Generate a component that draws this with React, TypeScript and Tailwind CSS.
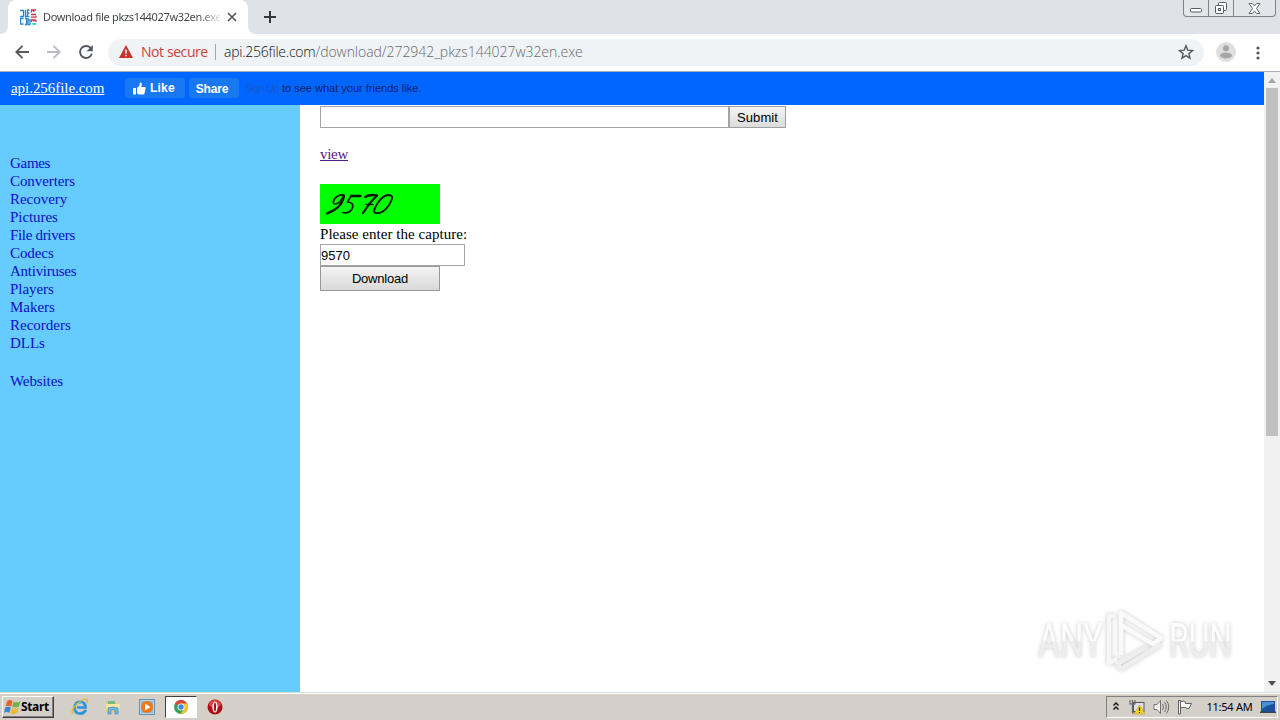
import React from "react";

const categories = [
  { name: "Games", tracking: "tracking-[-0.3px]" },
  { name: "Converters", tracking: "tracking-[-0.08px]" },
  { name: "Recovery", tracking: "tracking-[-0.02px]" },
  { name: "Pictures", tracking: "tracking-[-0.06px]" },
  { name: "File drivers", tracking: "tracking-[-0.32px]" },
  { name: "Codecs", tracking: "tracking-[-0.08px]" },
  { name: "Antiviruses", tracking: "tracking-[-0.26px]" },
  { name: "Players", tracking: "tracking-[-0.06px]" },
  { name: "Makers", tracking: "tracking-[-0.02px]" },
  { name: "Recorders", tracking: "tracking-[0px]" },
  { name: "DLLs", tracking: "tracking-[-0.02px]" },
];

function SiteIcon() {
  return (
    <svg width="17" height="17" viewBox="0 0 17 17" fill="none" className="shrink-0">
      <path d="M0 1.500H3.500V7.500H0M5.500 1V7.500H7M9.500 1H7.500V7.500H9.500M7.500 4H9.500M3.500 9.500H.5V15H3.500M5 9.500H6.500V15.500H5M8 9V15.500H10V11H8" stroke="#2b85cf" strokeWidth="1.300" />
      <path d="M11.500 .5V3.500M11 1H16M13.700 1V3M11 5.500H16M11 8.200H16V6.800M11.500 10.500V13M11 11H16M13.700 11V12.500M16 11V13" stroke="#d62f4d" strokeWidth="1.300" />
      <path d="M11.500 14H16V16H13Z" fill="#3be0ad" />
    </svg>
  );
}

function TabStrip() {
  return (
    <div className="flex h-[34px] items-start bg-[#dee1e6]">
      <div className="h-[34px] w-[8px] bg-white"><div className="h-[34px] w-[8px] rounded-br-[8px] bg-[#dee1e6]" /></div>
      <div className="flex h-[34px] w-[240px] items-center rounded-t-[8px] bg-white pl-[12px]">
        <SiteIcon />
        <div className="ml-[6px] w-[177px] whitespace-nowrap bg-gradient-to-r from-[#3c4043] from-88% to-[#3c404322] bg-clip-text font-['Noto_Sans',sans-serif] text-[11px] leading-[16px] tracking-[-0.34px] text-transparent">Download file pkzs144027w32en.exe</div>
        <svg width="10" height="10" viewBox="0 0 10 10" className="ml-[7px]"><path d="M1 1L9 9M9 1L1 9" stroke="#55595e" strokeWidth="1.700" /></svg>
      </div>
      <div className="h-[34px] w-[8px] bg-white"><div className="h-[34px] w-[8px] rounded-bl-[8px] bg-[#dee1e6]" /></div>
      <svg width="12" height="12" viewBox="0 0 12 12" className="ml-[8px] mt-[11px]"><path d="M6 0V12M0 6H12" stroke="#33373b" strokeWidth="2" /></svg>
      <div className="ml-auto mr-[4px] flex h-[17px] w-[93px] overflow-hidden rounded-b-[4px] border border-t-0 border-[#7e848b] bg-[#e3e5e9]">
        <div className="flex w-[25px] items-center justify-center border-r border-[#7e848b]"><svg width="14" height="16" viewBox="0 0 14 16"><rect x="1.500" y="8.500" width="11" height="3.500" rx="1" fill="#fff" stroke="#555b63" /></svg></div>
        <div className="flex w-[25px] items-center justify-center border-r border-[#7e848b]">
          <svg width="14" height="14" viewBox="0 0 14 14" fill="#fff" stroke="#555b63"><rect x="4.500" y="1.500" width="8" height="8" rx="1" /><rect x="1.500" y="4.500" width="8" height="8" rx="1" /><rect x="4.500" y="7.500" width="2" height="2" /></svg>
        </div>
        <div className="flex flex-1 items-center justify-center"><svg width="13" height="11" viewBox="0 0 13 11"><path d="M1 .5H4.500L6.500 3L8.500 .5H12L8.500 5.500L12 10.500H8.500L6.500 8L4.500 10.500H1L4.500 5.500Z" fill="#fff" stroke="#60666e" /></svg></div>
      </div>
    </div>
  );
}

function Toolbar() {
  return (
    <div className="flex h-[38px] items-center border-b border-[#a9afb8] bg-white font-['Open_Sans','Noto_Sans',sans-serif] text-[14px] leading-[20px]">
      <svg width="14" height="14" viewBox="0 0 14 14" fill="none" stroke="#55595e" strokeWidth="1.900" className="mb-[2px] ml-[15px]"><path d="M14 7H1.500M7.500 .8L1.300 7L7.500 13.200" /></svg>
      <svg width="14" height="14" viewBox="0 0 14 14" fill="none" stroke="#b9bbbe" strokeWidth="1.900" className="mb-[2px] ml-[18px]"><path d="M0 7H12.500M6.500 .8L12.700 7L6.500 13.200" /></svg>
      <svg width="14" height="14" viewBox="0 0 14 14" fill="none" stroke="#55595e" strokeWidth="1.900" className="mb-[2px] ml-[18px]"><path d="M12 3.500A6 6 0 1 0 12.800 8.800" /><path d="M13.800 0V6.200H7.600Z" fill="#55595e" stroke="none" /></svg>
      <div className="mb-px ml-[15px] flex h-[27px] w-[1096px] items-center rounded-full bg-[#f0f3f5] pb-px pl-[11px]">
        <svg width="14" height="13" viewBox="0 0 14 13"><path d="M7 0L14 13H0Z" fill="#cc302b" /><path d="M7 4.500V8.500M7 9.700V11.200" stroke="#fff" strokeWidth="1.500" /></svg>
        <div className="ml-[8px] w-[68px] whitespace-nowrap tracking-[-0.42px] text-[#c9413c]">Not secure</div>
        <div className="ml-[6px] h-[16px] w-px bg-[#a3a7ac]" />
        <div className="ml-[8px] whitespace-nowrap font-light text-[#66696d]"><span className="tracking-[-0.24px] text-[#111214]">api.256file.com</span><span className="tracking-[-0.05px]">/download/272942_pkzs144027w32en.exe</span></div>
        <svg width="16" height="16" viewBox="0 0 16 16" className="ml-auto mr-[10px]"><path d="M8 1.700L9.800 6.100L14.500 6.500L10.900 9.600L12 14.200L8 11.700L4 14.200L5.100 9.600L1.500 6.500L6.200 6.100Z" fill="none" stroke="#55595e" strokeWidth="1.400" /></svg>
      </div>
      <svg width="20" height="20" viewBox="0 0 20 20" className="mb-[2px] ml-[12px]"><circle cx="10" cy="10" r="10" fill="#dedfe1" /><circle cx="10" cy="6.200" r="3" fill="#a6a6a7" /><ellipse cx="10" cy="13.500" rx="6" ry="3" fill="#a6a6a7" /></svg>
      <svg width="4" height="14" viewBox="0 0 4 14" className="ml-[20px]" fill="#55595e"><circle cx="2" cy="2" r="1.600" /><circle cx="2" cy="7" r="1.600" /><circle cx="2" cy="12" r="1.600" /></svg>
    </div>
  );
}

function SiteHeader() {
  return (
    <header className="flex h-[33px] items-center bg-[#0066ff] pb-px pl-[11px] font-['Liberation_Sans',sans-serif]">
      <a className="w-[93px] whitespace-nowrap font-['Liberation_Serif',serif] text-[15px] leading-[18px] tracking-[-0.05px] text-white underline">api.256file.com</a>
      <button className="ml-[21px] flex h-[20px] w-[60px] items-center rounded-[3px] bg-[#1778f2] pl-[8px] text-[12px] font-bold leading-[16px] text-white">
        <svg width="13" height="13" viewBox="0 0 13 13" fill="#fff"><path d="M0 6H3V12.500H0ZM4 6L6.500 3.500L6.800 .5Q9 .2 8.800 2.500L8.300 5H12Q13 5.200 12.700 6.300L11.500 11.500Q11.200 12.500 10 12.500H6L4 11.500Z" /></svg>
        <span className="ml-[4px] tracking-[0.2px]">Like</span>
      </button>
      <button className="ml-[4px] flex h-[20px] w-[50px] items-center justify-center rounded-[3px] bg-[#1778f2] pr-[4px] pt-px text-[12px] font-bold leading-[16px] tracking-[-0.2px] text-white">Share</button>
      <div className="ml-[6px] whitespace-nowrap text-[11px] leading-[14px] text-[#0b2360]"><span className="mr-[3px] inline-block w-[34px] tracking-[-0.75px] text-[#1858cc]">Sign Up</span><span>to see what your friends like.</span></div>
    </header>
  );
}

function Sidebar() {
  return (
    <nav className="w-[300px] shrink-0 bg-[#66ccff] pl-[10px] pt-[49px] font-['Liberation_Serif',serif] text-[15px] leading-[18px] text-[#0b0cc8]">
      {categories.map((item) => <div key={item.name} className={item.tracking}>{item.name}</div>)}
      <div className="mt-[20px] tracking-[-0.1px]">Websites</div>
    </nav>
  );
}

function DownloadForm() {
  return (
    <main className="flex flex-1 flex-col items-start pl-[20px] pt-px font-['Liberation_Serif',serif] text-[15px] leading-[18px] text-black">
      <div className="flex h-[22px]">
        <div className="h-[22px] w-[409px] border border-[#a5a5a5] bg-white" />
        <button className="h-[22px] w-[57px] border border-[#a0a0a0] bg-gradient-to-b from-[#f4f4f4] to-[#dcdcdc] pt-px font-['Liberation_Sans',sans-serif] text-[13px] leading-[19px] tracking-[0.05px]">Submit</button>
      </div>
      <a className="mt-[17px] tracking-[-0.3px] text-[#551a8b] underline">view</a>
      <div className="mt-[21px] h-[40px] w-[120px] bg-[#00ff00]">
        <svg width="120" height="40" viewBox="0 0 120 40" fill="none" stroke="#031803" strokeLinecap="round" strokeLinejoin="round">
          <path d="M24 11Q18 10 14.500 15Q12 19.500 15 20Q20 20 24 11" strokeWidth="1.700" />
          <path d="M24 12Q22 24 7 29.500" strokeWidth="2.200" />
          <path d="M31 12H40.500" strokeWidth="2.300" /><path d="M31 12L27.500 18Q35 18.500 32 25Q29 30 23 28.500" strokeWidth="1.700" />
          <path d="M45 13Q50 10 57 11.500" strokeWidth="2.300" /><path d="M57 11.500Q49 19 43 29" strokeWidth="2.200" /><path d="M46 20.500H53" strokeWidth="1.300" />
          <path d="M71 11.500Q65 9 58.500 18Q51 29 56.500 29Q63 30 69 21Q74 13 71 11.500Z" strokeWidth="1.900" />
        </svg>
      </div>
      <label className="mt-px whitespace-nowrap tracking-[0.04px]">Please enter the capture:</label>
      <div className="mt-px h-[22px] w-[145px] border border-[#a5a5a5] bg-white pt-px font-['Liberation_Sans',sans-serif] text-[13px] leading-[19px]">9570</div>
      <button className="h-[25px] w-[120px] border border-[#999999] bg-gradient-to-b from-[#f4f4f4] to-[#d9d9d9] pt-px font-['Liberation_Sans',sans-serif] text-[13px] leading-[22px] tracking-[-0.2px]">Download</button>
    </main>
  );
}

function Scrollbar() {
  return (
    <div className="flex w-[16px] shrink-0 flex-col items-center bg-[#f1f1f1]">
      <div className="flex h-[16px] items-center"><svg width="8" height="5" viewBox="0 0 8 5"><path d="M0 5L4 0L8 5Z" fill="#a3a3a3" /></svg></div>
      <div className="h-[348px] w-[12px] bg-[#c1c1c1]" />
      <div className="mt-auto flex h-[18px] items-center"><svg width="8" height="5" viewBox="0 0 8 5"><path d="M0 0H8L4 5Z" fill="#505050" /></svg></div>
    </div>
  );
}

function Watermark() {
  return (
    <div className="absolute left-[1038px] top-[608px] flex h-[66px] items-center font-['Roboto',sans-serif] text-[49px] font-normal leading-[66px] text-transparent [filter:drop-shadow(0_0_2px_#c8c8c8)]">
      <div className="flex w-[66px]"><span className="origin-left scale-x-[0.68] bg-gradient-to-b from-[#fdfdfd] from-50% to-[#eeeeee] to-50% bg-clip-text">ANY</span></div>
      <svg width="60" height="66" viewBox="0 0 60 66" fill="none" strokeWidth="4.500" strokeLinejoin="round" className="shrink-0">
        <path d="M17 61L13 56L43 39M57 36L17 61" stroke="#eeeeee" />
        <path d="M11 8H5V55L13 51" stroke="#f6f6f6" />
        <path d="M17 47V5L57 30L49 36L17 17" stroke="#fafafa" />
      </svg>
      <div className="ml-[5px] flex w-[66px]"><span className="origin-left scale-x-[0.65] bg-gradient-to-b from-[#fdfdfd] from-50% to-[#eeeeee] to-50% bg-clip-text">RUN</span></div>
    </div>
  );
}

function WindowsFlag() {
  return (
    <svg width="17" height="16" viewBox="0 0 16 15" className="shrink-0"><path d="M3 2Q6 0 8 2L6.700 7Q4 5.500 1.500 7Z" fill="#e66028" /><path d="M9 2.500Q12 4 15.500 2L14 7Q11 8.500 7.700 7.300Z" fill="#72b446" /><path d="M1.200 8Q4 6.500 6.500 8L5 13Q2.500 11.500 0 13Z" fill="#3d86cb" /><path d="M7.400 8.500Q10 10 13.700 8L12.200 13Q9 15 6 13.500Z" fill="#f1b82d" /></svg>
  );
}

function Taskbar() {
  return (
    <div className="flex h-[28px] items-center border-t border-[#d7dce0] bg-[#d4d0c8] pb-px pt-[2px] text-black shadow-[inset_0_1px_0_#ffffff]">
      <div className="ml-[2px] flex h-[22px] w-[52px] items-center border border-b-[#404040] border-l-white border-r-[#404040] border-t-white pl-px shadow-[inset_-1px_-1px_0_#808080]">
        <WindowsFlag />
        <span className="font-['Noto_Sans',sans-serif] text-[12px] font-bold leading-[16px] tracking-[-0.35px]">Start</span>
      </div>
      <svg width="18" height="18" viewBox="0 0 18 18" fill="none" className="ml-[17px]"><path d="M15 12Q12.500 16 8.500 15.500Q3.500 15 3.500 9.500Q4 4 9 3.800Q14.500 4 14.500 9.500H6" stroke="#2d94d8" strokeWidth="2.700" /><path d="M5 6Q9 3 12 6" stroke="#75c7ef" strokeWidth="1" /><path d="M2 16Q-1 13 6 6Q14 -1 16.500 2Q17 3 15.500 5" stroke="#e3b62f" strokeWidth="1.300" /></svg>
      <svg width="16" height="16" viewBox="0 0 16 16" className="ml-[16px]"><path d="M1 3L6 2L7 4H14V13H1Z" fill="#e8ca68" /><path d="M3 2H10V5H3Z" fill="#71b989" /><path d="M1 5H15L14 12H2Z" fill="#f8e7a0" /><path d="M3 9Q8 7 13 9V15H10V11H6V15H3Z" fill="#73b7db" stroke="#428eb9" strokeWidth=".7" /></svg>
      <svg width="16" height="16" viewBox="0 0 16 16" className="ml-[18px]"><rect x=".5" y=".5" width="15" height="15" fill="#b9d6ed" stroke="#5b91bd" /><rect x="2" y="2" width="12" height="12" fill="#8ab9de" /><circle cx="8" cy="8" r="6" fill="#f07912" /><path d="M6 4.500L11.500 8L6 11.500Z" fill="#fff" /></svg>
      <div className="ml-[10px] flex h-[22px] w-[32px] items-center justify-center border border-b-white border-l-[#404040] border-r-white border-t-[#404040] bg-white">
        <svg width="14" height="14" viewBox="0 0 14 14"><circle cx="7" cy="7" r="7" fill="#36a152" /><path d="M7 7L1 3.500A7 7 0 0 1 13 3.500Z" fill="#dc4335" /><path d="M7 3.500H13A7 7 0 0 1 6.500 14L10 8.700Z" fill="#f5c623" /><circle cx="7" cy="7" r="3.500" fill="#fff" /><circle cx="7" cy="7" r="2.700" fill="#4285e5" /></svg>
      </div>
      <svg width="16" height="16" viewBox="0 0 16 16" className="ml-[10px]"><circle cx="8" cy="8" r="7.500" fill="#a90e14" /><ellipse cx="8" cy="5" rx="6" ry="4" fill="#d94444" /><ellipse cx="8" cy="8" rx="2.700" ry="5.500" fill="#f9eeee" /><ellipse cx="8" cy="8" rx="1" ry="4.500" fill="#9b1015" /></svg>
      <div className="ml-auto mr-[2px] flex h-[22px] w-[172px] items-center border border-b-white border-l-[#808080] border-r-white border-t-[#808080] pl-[6px]">
        <svg width="6" height="8" viewBox="0 0 6 8" fill="none" stroke="#111" strokeWidth="1.400" className="mb-[3px]"><path d="M.5 3.500L3 1L5.500 3.500M.5 7.500L3 5L5.500 7.500" /></svg>
        <svg width="16" height="16" viewBox="0 0 16 16" className="ml-[10px]"><rect x="4.500" y="3.500" width="10.500" height="9" fill="#dce3e5" stroke="#555" /><path d="M1 1V5H6V1M3.500 1V5M3.500 5V14H7" fill="none" stroke="#666" strokeWidth="1.200" /><path d="M10.500 6L16 15H5Z" fill="#f6d32b" stroke="#b59312" strokeWidth=".5" /><path d="M10.500 8.500V12M10.500 13V14" stroke="#222" strokeWidth="1.200" /></svg>
        <svg width="17" height="16" viewBox="0 0 17 16" fill="none" stroke="#707070" className="ml-[8px]"><path d="M1 5.500H4L7.500 1.500V14.500L4 10.500H1Z" fill="#f6f6f6" /><path d="M9.500 5Q11.500 8 9.500 11M11.500 3Q15 8 11.500 13M13.500 1.500Q18 8 13.500 14.500" /></svg>
        <svg width="16" height="16" viewBox="0 0 16 16" className="ml-[7px]" fill="#f7f7f7" stroke="#606060"><path d="M1.500 1.500H3.500V15H1.500Z" /><path d="M3.500 2.500Q6 1.500 8.500 3V4.500H14.500L12 9.500Q10 10 8.500 8.500Q6 8 3.500 9Z" /></svg>
        <span className="ml-[13.500px] w-[47px] whitespace-nowrap font-['Noto_Sans',sans-serif] text-[11px] leading-[14px] tracking-[-0.25px]">11:54 AM</span>
        <svg width="16" height="13" viewBox="0 0 16 13" className="ml-[6px]"><path d="M1 0H15V11H1Z" fill="#1c4f9c" /><path d="M2 1H14V3Q7 4 2 8Z" fill="#4c8fd4" /><path d="M0 10.500H16V12H0Z" fill="#34465c" /></svg>
      </div>
    </div>
  );
}

export default function App() {
  return (
    <div className="relative flex h-[720px] w-[1280px] flex-col overflow-hidden bg-white">
      <TabStrip />
      <Toolbar />
      <div className="flex h-[620px]">
        <div className="flex flex-1 flex-col"><SiteHeader /><div className="flex flex-1"><Sidebar /><DownloadForm /></div></div>
        <Scrollbar />
      </div>
      <Taskbar />
      <Watermark />
    </div>
  );
}
